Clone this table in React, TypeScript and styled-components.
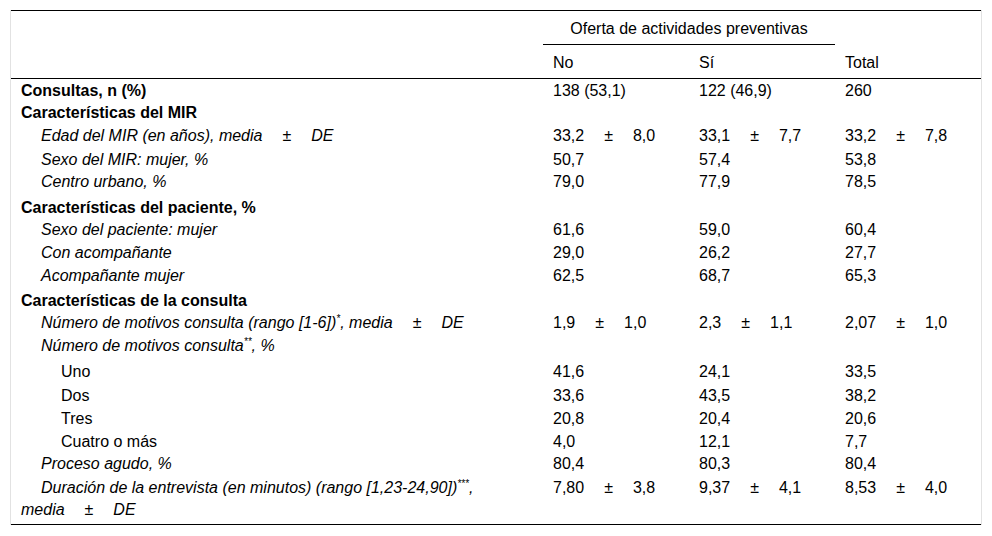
import React, { ReactNode } from 'react';
import styled, { createGlobalStyle } from 'styled-components';

const GlobalStyle = createGlobalStyle`
  html, body {
    margin: 0;
    padding: 0;
    background: #ffffff;
  }
  body {
    font-family: "Liberation Sans", Arial, sans-serif;
    font-size: 16px;
    color: #000;
  }
`;

const Frame = styled.div`
  width: 970px;
  margin: 10px 0 0 10px;
  border-left: 1px solid #e2e2e2;
  border-right: 1px solid #e2e2e2;
`;

const Table = styled.table`
  width: 970px;
  border-collapse: collapse;
  table-layout: fixed;
  border-top: 1px solid #000;
  border-bottom: 1.5px solid #000;
`;

const Head = styled.thead`
  border-bottom: 1.5px solid #000;
`;

const HeadCell = styled.th<{ $center?: boolean; $rule?: boolean }>`
  font-weight: normal;
  text-align: ${p => (p.$center ? 'center' : 'left')};
  vertical-align: bottom;
  padding: 7px 10px 4px;
  line-height: 22px;
  border-bottom: ${p => (p.$rule ? '1.5px solid #000' : 'none')};
`;

type Kind = 'bold' | 'item' | 'sub';

const Row = styled.tr<{ $pt: number; $pb: number }>`
  & > td {
    padding-top: ${p => p.$pt}px;
    padding-bottom: ${p => p.$pb}px;
  }
`;

const LabelCell = styled.td<{ $kind: Kind }>`
  padding: 0 10px;
  line-height: 22px;
  vertical-align: top;
  font-weight: ${p => (p.$kind === 'bold' ? 'bold' : 'normal')};
  font-style: ${p => (p.$kind === 'item' ? 'italic' : 'normal')};
  text-indent: ${p => (p.$kind === 'item' ? 20 : p.$kind === 'sub' ? 40 : 0)}px;
`;

const ValueCell = styled.td`
  padding: 0 10px;
  line-height: 22px;
  vertical-align: top;
  white-space: nowrap;
`;

const Pm = styled.span`
  display: inline-block;
  margin: 0 20px;
  text-indent: 0;
`;

const Keep = styled.span`
  white-space: nowrap;
`;

const Star = styled.sup`
  font-size: 10px;
  line-height: 1;
  vertical-align: 6px;
`;

type Value = string | [string, string];

interface Line {
  label: ReactNode;
  kind: Kind;
  pt: number;
  pb?: number;
  values?: [Value, Value, Value];
}

const MeanSd = () => (
  <Keep>
    media<Pm>±</Pm>DE
  </Keep>
);

const lines: Line[] = [
  { label: 'Consultas, n (%)', kind: 'bold', pt: 1, values: ['138 (53,1)', '122 (46,9)', '260'] },
  { label: 'Características del MIR', kind: 'bold', pt: 0 },
  {
    label: <>Edad del MIR (en años), <MeanSd /></>,
    kind: 'item',
    pt: 1,
    values: [['33,2', '8,0'], ['33,1', '7,7'], ['33,2', '7,8']],
  },
  { label: 'Sexo del MIR: mujer, %', kind: 'item', pt: 2, values: ['50,7', '57,4', '53,8'] },
  { label: 'Centro urbano, %', kind: 'item', pt: 0, values: ['79,0', '77,9', '78,5'] },
  { label: 'Características del paciente, %', kind: 'bold', pt: 4 },
  { label: 'Sexo del paciente: mujer', kind: 'item', pt: 0, values: ['61,6', '59,0', '60,4'] },
  { label: 'Con acompañante', kind: 'item', pt: 1, values: ['29,0', '26,2', '27,7'] },
  { label: 'Acompañante mujer', kind: 'item', pt: 1, values: ['62,5', '68,7', '65,3'] },
  { label: 'Características de la consulta', kind: 'bold', pt: 3 },
  {
    label: <>Número de motivos consulta (rango [1-6])<Star>*</Star>, <MeanSd /></>,
    kind: 'item',
    pt: 0,
    values: [['1,9', '1,0'], ['2,3', '1,1'], ['2,07', '1,0']],
  },
  { label: <>Número de motivos consulta<Star>**</Star>, %</>, kind: 'item', pt: 1 },
  { label: 'Uno', kind: 'sub', pt: 4, values: ['41,6', '24,1', '33,5'] },
  { label: 'Dos', kind: 'sub', pt: 2, values: ['33,6', '43,5', '38,2'] },
  { label: 'Tres', kind: 'sub', pt: 1, values: ['20,8', '20,4', '20,6'] },
  { label: 'Cuatro o más', kind: 'sub', pt: 1, values: ['4,0', '12,1', '7,7'] },
  { label: 'Proceso agudo, %', kind: 'item', pt: 0, values: ['80,4', '80,3', '80,4'] },
  {
    label: <>Duración de la entrevista (en minutos) (rango [1,23-24,90])<Star>***</Star>, <MeanSd /></>,
    kind: 'item',
    pt: 2,
    pb: 3,
    values: [['7,80', '3,8'], ['9,37', '4,1'], ['8,53', '4,0']],
  },
];

const renderValue = (v: Value) =>
  typeof v === 'string' ? (
    v
  ) : (
    <>
      {v[0]}
      <Pm>±</Pm>
      {v[1]}
    </>
  );

export default function App() {
  return (
    <>
      <GlobalStyle />
      <Frame>
        <Table>
          <colgroup>
            <col style={{ width: 532 }} />
            <col style={{ width: 146 }} />
            <col style={{ width: 146 }} />
            <col style={{ width: 146 }} />
          </colgroup>
          <Head>
            <tr>
              <HeadCell rowSpan={2} />
              <HeadCell colSpan={2} $center $rule>
                Oferta de actividades preventivas
              </HeadCell>
              <HeadCell rowSpan={2}>Total</HeadCell>
            </tr>
            <tr>
              <HeadCell>No</HeadCell>
              <HeadCell>Sí</HeadCell>
            </tr>
          </Head>
          <tbody>
            {lines.map((line, i) => (
              <Row key={i} $pt={line.pt} $pb={line.pb ?? 0}>
                <LabelCell $kind={line.kind}>{line.label}</LabelCell>
                {(line.values ?? ['', '', '']).map((v, j) => (
                  <ValueCell key={j}>{renderValue(v)}</ValueCell>
                ))}
              </Row>
            ))}
          </tbody>
        </Table>
      </Frame>
    </>
  );
}
